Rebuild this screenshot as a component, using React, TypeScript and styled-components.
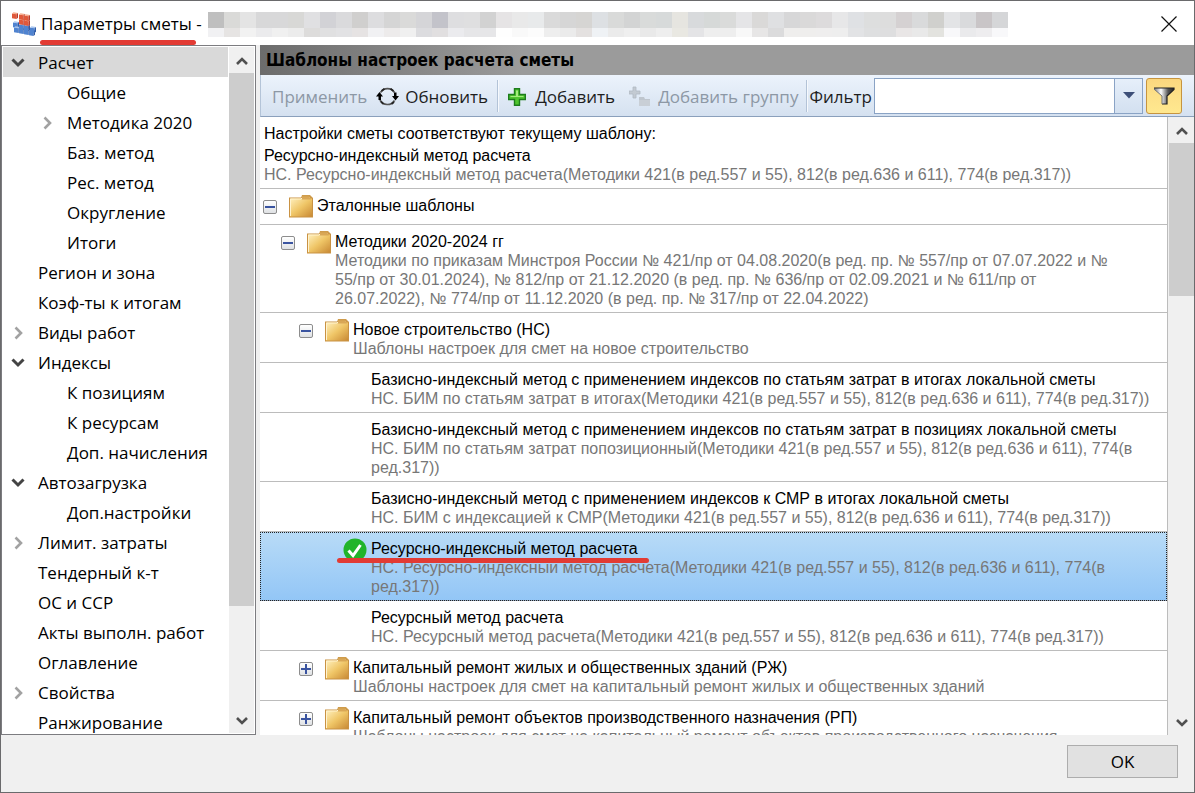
import React from 'react';
import styled, { createGlobalStyle, css } from 'styled-components';

const UI_FONT = '"Open Sans", "Noto Sans", sans-serif';
const LIST_FONT = '"Liberation Sans", Arial, sans-serif';
const HEADING_FONT = '"DejaVu Sans Condensed", "DejaVu Sans", sans-serif';

const GlobalStyle = createGlobalStyle`
  * { box-sizing: border-box; }
  body { margin: 0; background: #f0f0f0; font-family: ${UI_FONT}; color: #000; }
  button, input { font: inherit; color: inherit; }
`;

/* ---------- window frame ---------- */

const Dialog = styled.div`
  display: flex;
  flex-direction: column;
  height: 100vh;
  border: 1px solid #6a6a6c;
  background: #f0f0f0;
  overflow: hidden;
`;

const TitleBar = styled.header`
  display: flex;
  align-items: center;
  flex: none;
  height: 44px;
  padding: 2px 13px 0 10px;
  background: #fff;
`;

const Title = styled.h1`
  position: relative;
  margin: 0 6px 0 5px;
  font-size: 17px;
  font-weight: 400;
  line-height: 24px;
  white-space: nowrap;
`;

const Marker = styled.span<{ $top: number; $left: number; $width: number }>`
  position: absolute;
  top: ${(p) => p.$top}px;
  left: ${(p) => p.$left}px;
  width: ${(p) => p.$width}px;
  height: 5px;
  border-radius: 3px;
  background: #e23b34;
`;

const Mosaic = styled.div`
  display: grid;
  grid-template-columns: repeat(50, 16px);
  grid-template-rows: 16px 9px;
  flex: 0 1 auto;
  overflow: hidden;
`;

const Tile = styled.span<{ $color: string }>`
  background: ${(p) => p.$color};
`;

const CloseButton = styled.button`
  display: flex;
  align-items: center;
  justify-content: center;
  width: 24px;
  height: 24px;
  margin-left: auto;
  padding: 0;
  border: 0;
  background: none;
`;

const Body = styled.div`
  display: flex;
  flex: 1;
  min-height: 0;
  gap: 4px;
`;

/* ---------- navigation tree ---------- */

const Sidebar = styled.nav`
  display: flex;
  flex: none;
  width: 255px;
  padding: 1px;
  border: 1px solid #7c7c80;
  background: #fff;
`;

const TreeList = styled.ul`
  flex: 1;
  min-width: 0;
  margin: 0 1px 0 0;
  padding: 0;
  overflow: hidden;
  list-style: none;
`;

const TreeItem = styled.li<{ $level: number; $active?: boolean }>`
  display: flex;
  align-items: center;
  height: 30px;
  padding-top: 2px;
  padding-left: ${(p) => p.$level * 29}px;
  background: ${(p) => (p.$active ? '#d9d9d9' : 'transparent')};
`;

const TreeToggle = styled.span`
  display: flex;
  flex: none;
  justify-content: center;
  width: 29px;
`;

const TreeLink = styled.a`
  margin-left: 6px;
  color: #000;
  font-size: 17px;
  line-height: 24px;
  text-decoration: none;
  white-space: nowrap;
`;

/* ---------- scroll bars ---------- */

const ScrollTrack = styled.div`
  display: flex;
  flex-direction: column;
  flex: none;
  width: 25px;
  background: #f0f0f0;
`;

const ScrollButton = styled.button`
  display: flex;
  align-items: center;
  justify-content: center;
  flex: none;
  height: 26px;
  padding: 2px 0 0;
  border: 0;
  background: none;
`;

const ScrollLane = styled.div`
  flex: 1;
  min-height: 0;
`;

const ScrollThumb = styled.div<{ $share: number }>`
  height: ${(p) => p.$share}%;
  background: #cdcdcd;
`;

/* ---------- templates pane ---------- */

const Pane = styled.main`
  display: flex;
  flex: 1;
  flex-direction: column;
  min-width: 0;
`;

const PaneTitle = styled.h2`
  flex: none;
  height: 30px;
  margin: 0;
  padding: 0 6px;
  background: linear-gradient(90deg, #6c6c6c, #9b9b9b 28%);
  font-family: ${HEADING_FONT};
  font-size: 17px;
  font-weight: 700;
  line-height: 30px;
  white-space: nowrap;
`;

const Toolbar = styled.div`
  display: flex;
  align-items: center;
  flex: none;
  height: 42px;
  padding: 0 12px 0 11px;
  border-bottom: 1px solid #8ba0bc;
  border-left: 1px solid #b4c4d8;
  background: linear-gradient(#ecf3fc, #d5e1f0);
`;

const ToolButton = styled.button<{ $gap?: number }>`
  display: flex;
  align-items: center;
  flex: none;
  gap: ${(p) => p.$gap ?? 6}px;
  padding: 2px 0 0;
  border: 0;
  background: none;
  color: #1e1e1e;
  font-size: 17px;
  line-height: 24px;
  white-space: nowrap;
  &:disabled { color: #8d98a5; }
`;

const ToolGap = styled.span<{ $size: number }>`
  flex: none;
  width: ${(p) => p.$size}px;
`;

const Divider = styled.span`
  flex: none;
  width: 2px;
  height: 32px;
  border-left: 1px solid #b3c3d7;
  border-right: 1px solid #f6f9fd;
`;

const FilterLabel = styled.label`
  flex: none;
  padding: 2px 2px 0 1px;
  color: #1e1e1e;
  font-size: 17px;
  line-height: 24px;
`;

const Combo = styled.div`
  display: flex;
  flex: 1;
  min-width: 80px;
  height: 36px;
  border: 1px solid #8aa3c5;
  background: #fff;
`;

const ComboInput = styled.input`
  flex: 1;
  min-width: 0;
  padding: 0 6px;
  border: 0;
  outline: 0;
  background: none;
  font-size: 17px;
`;

const ComboArrow = styled.button`
  width: 28px;
  padding: 0;
  border: 0;
  border-left: 1px solid #8aa3c5;
  background: linear-gradient(#e6effa, #d3e0f0);
  svg { display: block; margin: 0 auto; }
`;

const FilterToggle = styled.button`
  display: flex;
  align-items: center;
  justify-content: center;
  flex: none;
  width: 36px;
  height: 36px;
  margin-left: 3px;
  padding: 0;
  border: 1px solid #c69440;
  border-radius: 3px;
  background: linear-gradient(#fbd77e, #fde189 50%, #ffe88f);
`;

const ListArea = styled.div`
  display: flex;
  flex: 1;
  min-height: 0;
  gap: 1px;
`;

const TemplateList = styled.div`
  flex: 1;
  min-width: 0;
  overflow: hidden;
  border-right: 1px solid #bcbcbc;
  background: #fff;
  font-family: ${LIST_FONT};
  font-size: 16px;
  line-height: 19px;
`;

const Summary = styled.div`
  padding: 7px 4px 4px;
  border-bottom: 1px solid #bcbcbc;
`;

const SummaryCaption = styled.p`
  margin: 0 0 3px;
`;

const Name = styled.p`
  margin: 0;
  white-space: nowrap;
`;

const Details = styled.p`
  margin: 0;
  color: #777;
  white-space: pre;
`;

const Row = styled.div<{ $level: number; $selected?: boolean }>`
  position: relative;
  display: flex;
  min-height: 36px;
  padding: 0 0 4px ${(p) => p.$level * 18 + 3}px;
  border-bottom: 1px solid #bcbcbc;
  ${(p) =>
    p.$selected &&
    css`
      background: linear-gradient(#b8dbf7, #93c6f6);
      border-bottom-color: #8fa5c0;
      outline: 1px dotted #222;
      outline-offset: -1px;
    `}
`;

const ToggleSlot = styled.span`
  flex: none;
  width: 14px;
  margin: 11px 12px 0 0;
`;

const Toggle = styled.button`
  display: block;
  width: 14px;
  height: 14px;
  padding: 0;
  border: 1px solid #8d8d8d;
  border-radius: 2px;
  background: linear-gradient(#fff, #dfe1e4);
  svg { display: block; }
`;

const IconSlot = styled.span`
  flex: none;
  width: 24px;
  height: 24px;
  margin: 6px 4px 0 0;
`;

const RowText = styled.div`
  flex: 1;
  min-width: 0;
  padding-top: 7px;
`;

/* ---------- footer ---------- */

const Footer = styled.footer`
  display: flex;
  justify-content: flex-end;
  flex: none;
  padding: 10px 16px 14px;
`;

const OkButton = styled.button`
  width: 111px;
  height: 33px;
  padding: 0;
  border: 1px solid #adadad;
  background: #e1e1e1;
  font-size: 17px;
`;

/* ---------- icons ---------- */

const Cube = ({ x, y, face, top, side }: { x: number; y: number; face: string; top: string; side: string }) => (
  <g transform={`translate(${x} ${y})`}>
    <path d="M0 1.500l4.500.8V7L0 6.200z" fill={face} />
    <path d="M0 1.500L1.500.3l4.500.8-1.500 1.200z" fill={top} />
    <path d="M4.500 2.300L6 1.100v4.700L4.500 7z" fill={side} />
  </g>
);

const redCube = { face: '#e0583a', top: '#f6a98a', side: '#b93a28' };
const blueCube = { face: '#4f83d0', top: '#a5c3ee', side: '#2f5aa6' };

const LogoIcon = () => (
  <svg width="25" height="25" viewBox="0 0 25 25" aria-hidden="true">
    <Cube x={1} y={0} {...redCube} />
    <Cube x={13} y={12} {...redCube} />
    <Cube x={2} y={9} {...blueCube} />
    <Cube x={3} y={14} {...blueCube} />
    <Cube x={8} y={15} {...blueCube} />
    <Cube x={13} y={16} {...blueCube} />
    <Cube x={18} y={17} {...blueCube} />
    <Cube x={8} y={11} {...blueCube} />
    <Cube x={13} y={12} {...blueCube} />
    <Cube x={8} y={6} {...redCube} />
    <Cube x={13} y={7} {...redCube} />
    <Cube x={8} y={1} {...redCube} />
    <Cube x={13} y={2} {...redCube} />
    <Cube x={19} y={14} {...blueCube} />
  </svg>
);

const CloseIcon = () => (
  <svg width="16" height="16" viewBox="0 0 16 16" aria-hidden="true">
    <path d="M.5.5l15 15M15.500.5l-15 15" stroke="#111" strokeWidth="1.200" />
  </svg>
);

const TreeChevron = ({ open }: { open: boolean }) => (
  <svg width="14" height="14" viewBox="0 0 14 14" fill="none" aria-hidden="true">
    {open ? (
      <path d="M1.500 3.500L7 9l5.500-5.500" stroke="#444" strokeWidth="3" />
    ) : (
      <path d="M4.500 1.500L10 7l-5.500 5.500" stroke="#a2a2a2" strokeWidth="2.600" />
    )}
  </svg>
);

const ScrollChevron = ({ up }: { up?: boolean }) => (
  <svg width="12" height="10" viewBox="0 0 12 10" fill="none" aria-hidden="true">
    <path d={up ? 'M1 8l5-5 5 5' : 'M1 2l5 5 5-5'} stroke="#505050" strokeWidth="2.600" />
  </svg>
);

const RefreshIcon = () => (
  <svg width="23" height="22" viewBox="0 0 23 22" fill="none" aria-hidden="true">
    <path d="M4.500 6.500A8.300 8.300 0 0 1 18.500 6.500" stroke="#555" strokeWidth="1.700" />
    <path d="M4 14a8.300 8.300 0 0 0 14.500.5" stroke="#555" strokeWidth="1.700" />
    <path d="M5.500 5l3-2.200M14.500 2.800l3 2.200M5 15.500l2.500 2.500M15.500 18l2.500-2" stroke="#222" strokeWidth="1.700" />
    <path d="M0 10.500L3.500 6 7 10.500H5V14H2.500v-3.500z" fill="#000" />
    <path d="M16 10h2V6.500h2.500V10H23l-3.500 4.500z" fill="#000" />
  </svg>
);

const PlusIcon = () => (
  <svg width="18" height="18" viewBox="0 0 18 18" aria-hidden="true">
    <path d="M6.500.7h5v5.800h5.800v5h-5.800v5.800h-5v-5.800H.7v-5h5.800z" fill="#4fc52f" stroke="#1d7d1c" strokeWidth="1.400" />
    <path d="M8 2.500h2V8h5.500v1h-13V8H8z" fill="#a4ec7d" />
  </svg>
);

const AddGroupIcon = () => (
  <svg width="22" height="22" viewBox="0 0 22 22" aria-hidden="true">
    <path d="M4 1h3v4h4v3H7v4H4V8H0V5h4z" fill="#c3cad2" stroke="#b0b9c3" strokeWidth=".8" />
    <path d="M10 11h5l1 2h5v7H10z" fill="#bfc6ce" />
    <path d="M10 14h11v6H10z" fill="#c9cfd6" />
  </svg>
);

const FunnelIcon = () => (
  <svg width="22" height="18" viewBox="0 0 22 18" aria-hidden="true">
    <defs>
      <linearGradient id="funnel" x1="0" x2="1">
        <stop offset="0" stopColor="#777" />
        <stop offset=".35" stopColor="#fff" />
        <stop offset=".7" stopColor="#555" />
        <stop offset="1" stopColor="#222" />
      </linearGradient>
    </defs>
    <path d="M1 1h20v1.500l-7 6.500v8H9V9L1 2.500z" fill="url(#funnel)" />
    <path d="M1 1h20v1.500l-7 6.500v8H9" stroke="#222" strokeWidth="1.200" fill="none" />
    <path d="M1 2l8 7v8" stroke="#777" fill="none" />
  </svg>
);

const FolderIcon = () => (
  <svg width="24" height="24" viewBox="0 0 24 24" aria-hidden="true">
    <defs>
      <linearGradient id="folder" x1="0" y1="0" x2="1" y2="1">
        <stop offset="0" stopColor="#fff0bd" />
        <stop offset=".5" stopColor="#efc566" />
        <stop offset="1" stopColor="#c98a35" />
      </linearGradient>
    </defs>
    <path d="M12 3l1-3h8l2 2v3H12z" fill="#cf9c4c" />
    <path d="M0 2.500h24V22.500H0z" fill="#c99243" />
    <path d="M1 3.500h22v18H1z" fill="url(#folder)" />
    <path d="M1.500 21V4H12l1-1h8" stroke="#fff3cf" fill="none" />
    <path d="M13 1.500h7l2 3h-9z" fill="#d9a756" />
  </svg>
);

const CheckIcon = () => (
  <svg width="24" height="24" viewBox="0 0 24 24" aria-hidden="true">
    <circle cx="12" cy="12" r="11.500" fill="#21b42a" />
    <path d="M5.500 12.500l4.500 5L17.500 7" stroke="#fff" strokeWidth="3" fill="none" />
  </svg>
);

/* ---------- data ---------- */

const mosaicTop =
  'bfbfbf dadad8 e4e4e4 d8d8d9 d8d8d9 d8d8d6 e0e0e2 d2d2d6 dadadc d0cfce dddddf d5d5d5 dadad9 d5d5d8 c3c3ca dedee0 dfdfe0 d2d2d2 e6e4e5 e9e9e9 e8eaeb dadada d6d6d6 d6d5d3 dde0e3 d9dad9 d3d4d4 d9dbda d7dada e6e5e0 d8dadc d6d9d8 dadbda e5e5e7 dad9d8 dfe0e2 d7d7d8 dad9d9 dddbdc e7e7e8 dfe1e4 dddede dddddd d5d1d2 d9dadb d0d0cd e3e4e6 d9dadc c9c5c7 d5d6d8'.split(' ');
const mosaicBottom =
  'f1f1f3 e6e4e3 f2f2f2 ebebed f0f0f0 ececec dddcdb e0e0e1 e2e2e4 e6e3e3 f1f1f3 edebeb f0f0f0 dcdcdf e1dfe0 ebebee e6e6e8 e6e6e8 fefefe f9f9f9 fcfcfc eeeeee ebebeb e4e1e0 eff2f5 ebebeb efefef e9e9e9 eeeeee e9e8e2 e4e4e6 eeeeee eeeeee f8f8f8 e7e6e6 dbdbdc efeeed efeeed efeeee eeeeee e2e3e5 dedfe0 dededf e9e6e6 e9e9e9 e3e3df f8f8fa eaeaec eeedef f8f8fa'.split(' ');

type Nav = { label: string; level?: number; open?: boolean };

const navigation: Nav[] = [
  { label: 'Расчет', open: true },
  { label: 'Общие', level: 1 },
  { label: 'Методика 2020', level: 1, open: false },
  { label: 'Баз. метод', level: 1 },
  { label: 'Рес. метод', level: 1 },
  { label: 'Округление', level: 1 },
  { label: 'Итоги', level: 1 },
  { label: 'Регион и зона' },
  { label: 'Коэф-ты к итогам' },
  { label: 'Виды работ', open: false },
  { label: 'Индексы', open: true },
  { label: 'К позициям', level: 1 },
  { label: 'К ресурсам', level: 1 },
  { label: 'Доп. начисления', level: 1 },
  { label: 'Автозагрузка', open: true },
  { label: 'Доп.настройки', level: 1 },
  { label: 'Лимит. затраты', open: false },
  { label: 'Тендерный к-т' },
  { label: 'ОС и ССР' },
  { label: 'Акты выполн. работ' },
  { label: 'Оглавление' },
  { label: 'Свойства', open: false },
  { label: 'Ранжирование' },
];

type Template = { name: string; details?: string; level: number; open?: boolean; selected?: boolean };

const templates: Template[] = [
  { name: 'Эталонные шаблоны', level: 0, open: true },
  {
    name: 'Методики 2020-2024 гг',
    details:
      'Методики по приказам Минстроя России № 421/пр от 04.08.2020(в ред. пр. № 557/пр от 07.07.2022 и №\n55/пр от 30.01.2024), № 812/пр от 21.12.2020 (в ред. пр. № 636/пр от 02.09.2021 и № 611/пр от\n26.07.2022), № 774/пр от 11.12.2020 (в ред. пр. № 317/пр от 22.04.2022)',
    level: 1,
    open: true,
  },
  { name: 'Новое строительство (НС)', details: 'Шаблоны настроек для смет на новое строительство', level: 2, open: true },
  {
    name: 'Базисно-индексный метод с применением индексов по статьям затрат в итогах локальной сметы',
    details: 'НС. БИМ по статьям затрат в итогах(Методики 421(в ред.557 и 55), 812(в ред.636 и 611), 774(в ред.317))',
    level: 3,
  },
  {
    name: 'Базисно-индексный метод с применением индексов по статьям затрат в позициях локальной сметы',
    details: 'НС. БИМ по статьям затрат попозиционный(Методики 421(в ред.557 и 55), 812(в ред.636 и 611), 774(в\nред.317))',
    level: 3,
  },
  {
    name: 'Базисно-индексный метод с применением индексов к СМР в итогах локальной сметы',
    details: 'НС. БИМ с индексацией к СМР(Методики 421(в ред.557 и 55), 812(в ред.636 и 611), 774(в ред.317))',
    level: 3,
  },
  {
    name: 'Ресурсно-индексный метод расчета',
    details: 'НС. Ресурсно-индексный метод расчета(Методики 421(в ред.557 и 55), 812(в ред.636 и 611), 774(в\nред.317))',
    level: 3,
    selected: true,
  },
  {
    name: 'Ресурсный метод расчета',
    details: 'НС. Ресурсный метод расчета(Методики 421(в ред.557 и 55), 812(в ред.636 и 611), 774(в ред.317))',
    level: 3,
  },
  {
    name: 'Капитальный ремонт жилых и общественных зданий (РЖ)',
    details: 'Шаблоны настроек для смет на капитальный ремонт жилых и общественных зданий',
    level: 2,
    open: false,
  },
  {
    name: 'Капитальный ремонт объектов производственного назначения (РП)',
    details: 'Шаблоны настроек для смет на капитальный ремонт объектов производственного назначения',
    level: 2,
    open: false,
  },
];

/* ---------- composed parts ---------- */

const ScrollBar = ({ share }: { share: number }) => (
  <ScrollTrack>
    <ScrollButton aria-label="Прокрутить вверх"><ScrollChevron up /></ScrollButton>
    <ScrollLane><ScrollThumb $share={share} /></ScrollLane>
    <ScrollButton aria-label="Прокрутить вниз"><ScrollChevron /></ScrollButton>
  </ScrollTrack>
);

const TemplateRow = ({ item }: { item: Template }) => {
  const isGroup = item.open !== undefined;
  return (
    <Row $level={item.level} $selected={item.selected}>
      <ToggleSlot>
        {isGroup && (
          <Toggle aria-label={item.open ? 'Свернуть' : 'Развернуть'} aria-expanded={item.open}>
            <svg width="12" height="12" viewBox="0 0 12 12" aria-hidden="true">
              <path d={item.open ? 'M1 6h10' : 'M1 6h10M6 1v10'} stroke="#3a54a0" strokeWidth="2" />
            </svg>
          </Toggle>
        )}
      </ToggleSlot>
      <IconSlot>
        {isGroup && <FolderIcon />}
        {item.selected && <CheckIcon />}
      </IconSlot>
      <RowText>
        <Name>{item.name}</Name>
        {item.details && <Details>{item.details}</Details>}
      </RowText>
      {item.selected && <Marker $top={26} $left={77} $width={312} />}
    </Row>
  );
};

export default function App() {
  return (
    <>
      <GlobalStyle />
      <Dialog role="dialog" aria-label="Параметры сметы">
        <TitleBar>
          <LogoIcon />
          <Title>
            Параметры сметы -
            <Marker $top={28} $left={-1} $width={156} />
          </Title>
          <Mosaic aria-hidden="true">
            {[...mosaicTop, ...mosaicBottom].map((c, i) => (
              <Tile key={i} $color={`#${c}`} />
            ))}
          </Mosaic>
          <CloseButton aria-label="Закрыть"><CloseIcon /></CloseButton>
        </TitleBar>

        <Body>
          <Sidebar>
            <TreeList>
              {navigation.map((n, i) => (
                <TreeItem key={n.label} $level={n.level ?? 0} $active={i === 0}>
                  <TreeToggle>{n.open !== undefined && <TreeChevron open={n.open} />}</TreeToggle>
                  <TreeLink href="#">{n.label}</TreeLink>
                </TreeItem>
              ))}
            </TreeList>
            <ScrollBar share={84} />
          </Sidebar>

          <Pane>
            <PaneTitle>Шаблоны настроек расчета сметы</PaneTitle>
            <Toolbar>
              <ToolButton disabled>Применить</ToolButton>
              <ToolGap $size={9} />
              <ToolButton><RefreshIcon />Обновить</ToolButton>
              <ToolGap $size={9} />
              <Divider />
              <ToolGap $size={9} />
              <ToolButton $gap={9}><PlusIcon />Добавить</ToolButton>
              <ToolGap $size={14} />
              <ToolButton $gap={7} disabled><AddGroupIcon />Добавить группу</ToolButton>
              <ToolGap $size={8} />
              <Divider />
              <FilterLabel htmlFor="filter">Фильтр</FilterLabel>
              <Combo>
                <ComboInput id="filter" type="text" />
                <ComboArrow aria-label="Показать список">
                  <svg width="12" height="7" viewBox="0 0 12 7" aria-hidden="true">
                    <path d="M0 0h12L6 6.500z" fill="#3d4f78" />
                  </svg>
                </ComboArrow>
              </Combo>
              <FilterToggle aria-label="Фильтр включен" aria-pressed="true"><FunnelIcon /></FilterToggle>
            </Toolbar>
            <ListArea>
              <TemplateList>
                <Summary>
                  <SummaryCaption>Настройки сметы соответствуют текущему шаблону:</SummaryCaption>
                  <Name>Ресурсно-индексный метод расчета</Name>
                  <Details>НС. Ресурсно-индексный метод расчета(Методики 421(в ред.557 и 55), 812(в ред.636 и 611), 774(в ред.317))</Details>
                </Summary>
                {templates.map((t) => (
                  <TemplateRow key={t.name} item={t} />
                ))}
              </TemplateList>
              <ScrollBar share={27} />
            </ListArea>
          </Pane>
        </Body>

        <Footer>
          <OkButton>OK</OkButton>
        </Footer>
      </Dialog>
    </>
  );
}
